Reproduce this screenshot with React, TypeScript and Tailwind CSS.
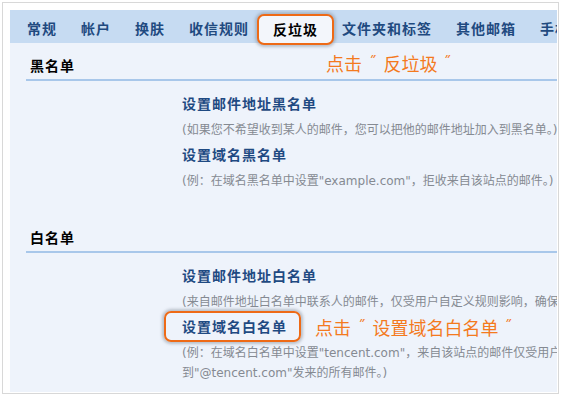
import React from 'react';

const tabs = ['常规', '帐户', '换肤', '收信规则', '反垃圾', '文件夹和标签', '其他邮箱', '手机'];

function Tabs() {
  return (
    <div className="flex h-[33px] shrink-0 items-center gap-[24px] bg-[#c6dbf2] pl-[17px] pt-[3px] whitespace-nowrap">
      {tabs.map((t) =>
        t === '反垃圾' ? (
          <div
            key={t}
            className="-mx-[16px] flex h-[31px] shrink-0 items-center self-start mt-[1px] rounded-[7px] border-2 border-[#ee6a16] bg-[#f3f6fb] px-[14px] text-black shadow-[0_0_3px_2px_rgba(140,150,162,0.55)]"
          >
            {t}
          </div>
        ) : (
          <div key={t} className="shrink-0 text-[#1f4a80]">
            {t}
          </div>
        )
      )}
    </div>
  );
}

// orange call-out text: 点击 ˝ xxx ˝
function Note({ text, className }: { text: string; className?: string }) {
  return (
    <span className={'flex items-center text-[18px] font-normal tracking-normal text-[#f47a1e] ' + (className ?? '')}>
      <span>点击</span>
      <span className="mx-[7px] font-['DejaVu_Sans',sans-serif] text-[15px]">˝</span>
      <span>{text}</span>
      <span className="ml-[6px] font-['DejaVu_Sans',sans-serif] text-[15px]">˝</span>
    </span>
  );
}

function SectionHead({ title, note }: { title: string; note?: string }) {
  return (
    <div className="ml-[16px]">
      <div className="flex h-[20px] items-center whitespace-nowrap">
        <span className="pl-[4px] text-black">{title}</span>
        {note && <Note text={note} className="ml-[251px] -mt-[3px]" />}
      </div>
      <div className="mt-[4px] h-[2px] bg-[#a8c7ea]" />
    </div>
  );
}

function Item({ title, children, boxed, note }: { title: string; children: React.ReactNode; boxed?: boolean; note?: string }) {
  return (
    <div className="mt-[4px] first:mt-[12px]">
      <div className="flex h-[20px] items-center whitespace-nowrap text-[#1f4a82]">
        {boxed ? (
          <>
            <div className="-ml-[18px] flex h-[31px] shrink-0 items-center rounded-[7px] border-2 border-[#ee6a16] pl-[16px] pr-[12px] shadow-[0_0_3px_2px_rgba(140,150,162,0.55)]">
              {title}
            </div>
            {note && <Note text={note} className="ml-[14px] mt-[2px]" />}
          </>
        ) : (
          <span>{title}</span>
        )}
      </div>
      <div className="mt-[7px] whitespace-nowrap text-[12px] font-normal leading-[20px] tracking-normal text-[#858a92] font-['DejaVu_Sans','Noto_Sans_CJK_SC',sans-serif]">
        {children}
      </div>
    </div>
  );
}

export default function App() {
  return (
    <div className="h-[397px] w-[562px] overflow-hidden bg-white pl-[2px] pt-[2px] font-['Noto_Sans_CJK_SC',sans-serif] text-[14px] font-bold tracking-[1px]">
      <div className="h-[392px] w-[557px] border border-[#d8d8d8] pl-[7px] pr-[1px] pt-[7px] pb-[1px]">
        <div className="flex h-full flex-col overflow-hidden bg-[#eef3fb]">
          <Tabs />
          <div className="pt-[12px]">
            <SectionHead title="黑名单" note="反垃圾" />
            <div className="pl-[172px]">
              <Item title="设置邮件地址黑名单">
                (如果您不希望收到某人的邮件，您可以把他的邮件地址加入到黑名单。)
              </Item>
              <Item title="设置域名黑名单">
                (例：在域名黑名单中设置"example.com"，拒收来自该站点的邮件。)
              </Item>
            </div>
            <div className="mt-[36px]">
              <SectionHead title="白名单" />
            </div>
            <div className="pl-[172px]">
              <Item title="设置邮件地址白名单">
                (来自邮件地址白名单中联系人的邮件，仅受用户自定义规则影响，确保您能收到这些邮件。)
              </Item>
              <Item title="设置域名白名单" boxed note="设置域名白名单">
                <div>(例：在域名白名单中设置"tencent.com"，来自该站点的邮件仅受用户自定义规则影响，确保您收</div>
                <div>到"@tencent.com"发来的所有邮件。)</div>
              </Item>
            </div>
          </div>
        </div>
      </div>
    </div>
  );
}
